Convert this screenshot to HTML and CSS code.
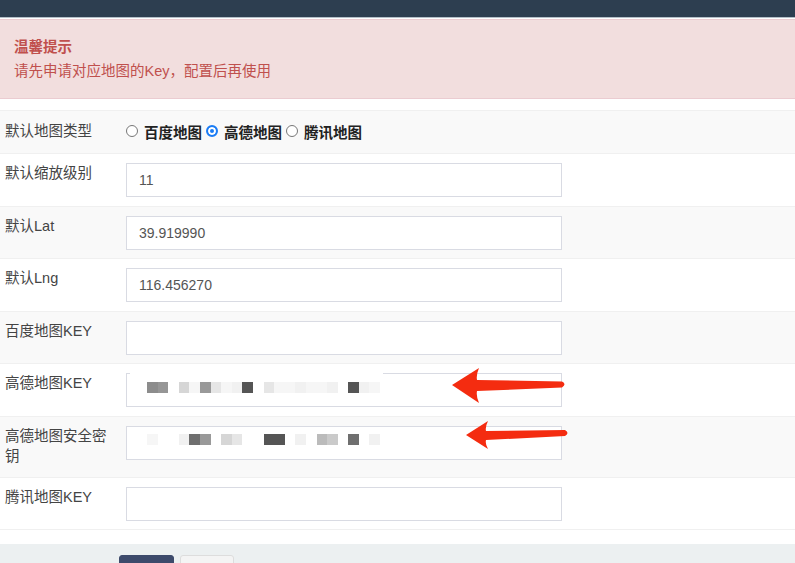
FILE: index.html
```html
<!DOCTYPE html>
<html lang="zh-CN">
<head>
    <meta charset="UTF-8">
    <title>地图配置</title>
    <link rel="stylesheet" href="styles.css">
</head>
<body>
    <div class="topbar"></div>
    <div class="alert">
        <h4>温馨提示</h4>
        <p>请先申请对应地图的Key，配置后再使用</p>
    </div>
    <form class="config">
        <div class="row row-radio">
            <label class="name">默认地图类型</label>
            <div class="field radios">
                <label><input type="radio" name="type" value="baidu">百度地图</label>
                <label><input type="radio" name="type" value="amap" checked>高德地图</label>
                <label><input type="radio" name="type" value="qq">腾讯地图</label>
            </div>
        </div>
        <div class="row">
            <label class="name">默认缩放级别</label>
            <div class="field"><input class="input" type="text" value="11"></div>
        </div>
        <div class="row">
            <label class="name">默认Lat</label>
            <div class="field"><input class="input" type="text" value="39.919990"></div>
        </div>
        <div class="row">
            <label class="name">默认Lng</label>
            <div class="field"><input class="input" type="text" value="116.456270"></div>
        </div>
        <div class="row">
            <label class="name">百度地图KEY</label>
            <div class="field"><input class="input" type="text" value=""></div>
        </div>
        <div class="row">
            <label class="name">高德地图KEY</label>
            <div class="field">
                <input class="input" type="text" value="">
                <!-- 打码 -->
                <div class="mask mask-wide">
                    <div class="pix">
                        <i class="g4"></i><i class="g4b"></i><i></i><i class="g1"></i><i class="g0"></i><i class="g3"></i><i class="g1b"></i><i class="g0"></i><i class="g0b"></i><i class="g5"></i><i></i><i class="g1b"></i><i class="g0"></i><i class="g0"></i><i class="g0b"></i><i class="g0"></i><i class="g0"></i><i class="g0b"></i><i></i><i class="g5"></i><i class="g0b"></i><i class="g0"></i>
                    </div>
                </div>
            </div>
        </div>
        <div class="row">
            <label class="name">高德地图安全密钥</label>
            <div class="field">
                <input class="input" type="text" value="">
                <div class="mask">
                    <div class="pix">
                        <i class="g0"></i><i></i><i></i><i class="g0b"></i><i class="g4c"></i><i class="g3"></i><i></i><i class="g1"></i><i class="g1b"></i><i></i><i></i><i class="g5"></i><i class="g5"></i><i></i><i class="g0b"></i><i></i><i class="g2"></i><i class="g2b"></i><i></i><i class="g4c"></i><i></i><i class="g0b"></i>
                    </div>
                </div>
            </div>
        </div>
        <div class="row">
            <label class="name">腾讯地图KEY</label>
            <div class="field"><input class="input" type="text" value=""></div>
        </div>
    </form>
    <div class="footer">
        <button type="submit" class="btn btn-primary" aria-label="确定"></button>
        <button type="reset" class="btn" aria-label="重置"></button>
    </div>

    <svg class="arrows" width="795" height="563" viewBox="0 0 795 563">
        <path d="M452,385 L479,368 Q476,375 477,380 L562,381.5 Q567,384 562,387.5 L477,391 Q476,396 479,403 Z"/>
        <path d="M466,435 L488,421 Q485,427 486,431 L565,430 Q570,433 565,436 L486,440 Q485,444 488,449 Z"/>
    </svg>
</body>
</html>
```

FILE: styles.css
```css
body { margin: 0; position: relative; background: #fff; color: #333; font-family: "Liberation Sans", "Noto Sans CJK SC", sans-serif; font-size: 14.5px; }

.topbar { height: 17px; background: #2d3e50; border-bottom: 1px solid #b4bec8; }

/* 提示框 */
.alert {
    margin: 1px 0 11px;
    padding: 15px 14px;
    background: #f2dede;
    border-top: 1px solid #ebccd1;
    border-bottom: 1px solid #ebccd1;
    color: #c0504d;
    line-height: 24px;
}
.alert h4 { margin: 0; font-size: 14.5px; font-weight: bold; }
.alert p { margin: 0; }

/* 表单行 */
.config { margin-bottom: 14px; }
.row { display: flex; align-items: flex-start; border-top: 1px solid #f0f0f0; padding: 9px 0 8.5px; }
.row:nth-child(odd) { background: #f9f9f9; }
.row:last-child { border-bottom: 1px solid #f0f0f0; }
.name { flex-shrink: 0; width: 104px; padding: 0 9px 2.5px 5px; line-height: 20px; color: #444; }
.field { position: relative; padding-left: 8px; }

.input {
    display: block;
    box-sizing: border-box;
    width: 436px;
    height: 34px;
    margin: 0;
    padding: 0 12px;
    border: 1px solid #d9dbe3;
    border-radius: 0;
    background: #fff;
    color: #555;
    font-family: inherit;
    font-size: 14px;
    outline: none;
}

/* 单选 */
.row-radio { height: 26px; padding: 7px 0 9px; }
.row-radio .name { display: flex; align-items: center; height: 26px; padding-bottom: 0; }
.radios { display: flex; align-items: center; height: 26px; color: #222; font-weight: bold; }
.radios label { display: flex; align-items: center; margin-right: 4px; }
.radios input {
    appearance: none;
    -webkit-appearance: none;
    box-sizing: border-box;
    width: 12px;
    height: 12px;
    margin: 0 6px 0 0;
    border: 1px solid #777;
    border-radius: 50%;
    background: #fff;
}
.radios input:checked { border: 2px solid #1a7cf5; background: #1a7cf5; box-shadow: inset 0 0 0 2px #fff; }

/* 打码 */
.mask { position: absolute; left: 12px; top: 8px; }
.mask-wide { top: -7px; width: 253px; height: 40px; background: #fff; }
.mask .pix { display: flex; margin-left: 17px; }
.mask-wide .pix { margin-top: 16px; }
.pix i { display: block; width: 10.6px; height: 11px; }
.pix .g0 { background: #f6f6f6; }
.pix .g0b { background: #f1f1f1; }
.pix .g1 { background: #d6d6d6; }
.pix .g1b { background: #e6e6e6; }
.pix .g2 { background: #bbb; }
.pix .g2b { background: #cacaca; }
.pix .g3 { background: #999; }
.pix .g4 { background: #8c8c8c; }
.pix .g4b { background: #969696; }
.pix .g4c { background: #6f6f6f; }
.pix .g5 { background: #555; }

/* 底部按钮 */
.footer { height: 40px; padding: 11px 0 0 119px; background: #ecf0f1; }
.btn { width: 54px; height: 34px; margin: 0 1px 0 0; border: 1px solid #ddd; border-radius: 3px; background: #f4f4f4; vertical-align: top; }
.btn-primary { width: 55px; margin-right: 2px; border-color: #3d4a6b; background: #3d4a6b; }

.arrows { position: absolute; left: 0; top: 0; pointer-events: none; }
.arrows path { fill: #f42c10; }
```
